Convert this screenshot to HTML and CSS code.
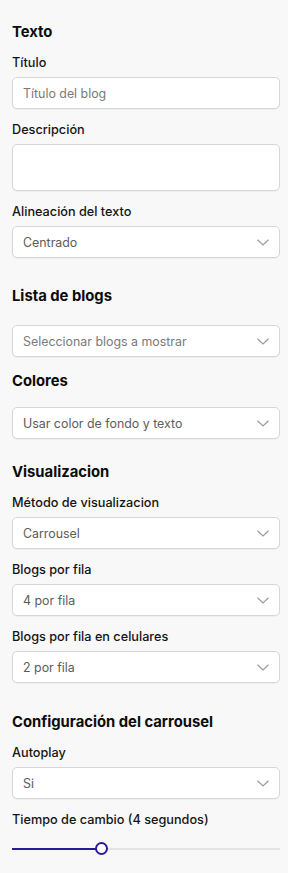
FILE: index.html
```html
<!DOCTYPE html>
<html lang="es">
<head>
<meta charset="utf-8">
<title>Configuración</title>
<link rel="stylesheet" href="styles.css">
</head>
<body>
<div class="panel">
  <section class="section">
    <h2 class="section-title">Texto</h2>
    <div class="field">
      <div class="label">Título</div>
      <div class="control"><span class="placeholder">Título del blog</span></div>
    </div>
    <div class="field">
      <div class="label">Descripción</div>
      <div class="control textarea"></div>
    </div>
    <div class="field">
      <div class="label">Alineación del texto</div>
      <div class="control select"><span class="value">Centrado</span><svg class="chev" viewBox="0 0 12 7" width="12" height="7"><path d="M0.5 0.8 L6 6 L11.5 0.8" fill="none" stroke="#9a9a9a" stroke-width="1.2"/></svg></div>
    </div>
  </section>

  <section class="section s-lista">
    <h2 class="section-title">Lista de blogs</h2>
    <div class="control select gap-big"><span class="placeholder">Seleccionar blogs a mostrar</span><svg class="chev" viewBox="0 0 12 7" width="12" height="7"><path d="M0.5 0.8 L6 6 L11.5 0.8" fill="none" stroke="#9a9a9a" stroke-width="1.2"/></svg></div>
  </section>

  <section class="section s-colores">
    <h2 class="section-title">Colores</h2>
    <div class="control select gap-mid"><span class="value">Usar color de fondo y texto</span><svg class="chev" viewBox="0 0 12 7" width="12" height="7"><path d="M0.5 0.8 L6 6 L11.5 0.8" fill="none" stroke="#9a9a9a" stroke-width="1.2"/></svg></div>
  </section>

  <section class="section s-visual">
    <h2 class="section-title">Visualizacion</h2>
    <div class="field">
      <div class="label">Método de visualizacion</div>
      <div class="control select"><span class="value">Carrousel</span><svg class="chev" viewBox="0 0 12 7" width="12" height="7"><path d="M0.5 0.8 L6 6 L11.5 0.8" fill="none" stroke="#9a9a9a" stroke-width="1.2"/></svg></div>
    </div>
    <div class="field">
      <div class="label">Blogs por fila</div>
      <div class="control select"><span class="value">4 por fila</span><svg class="chev" viewBox="0 0 12 7" width="12" height="7"><path d="M0.5 0.8 L6 6 L11.5 0.8" fill="none" stroke="#9a9a9a" stroke-width="1.2"/></svg></div>
    </div>
    <div class="field">
      <div class="label">Blogs por fila en celulares</div>
      <div class="control select"><span class="value">2 por fila</span><svg class="chev" viewBox="0 0 12 7" width="12" height="7"><path d="M0.5 0.8 L6 6 L11.5 0.8" fill="none" stroke="#9a9a9a" stroke-width="1.2"/></svg></div>
    </div>
  </section>

  <section class="section s-config">
    <h2 class="section-title">Configuración del carrousel</h2>
    <div class="field">
      <div class="label">Autoplay</div>
      <div class="control select"><span class="value">Si</span><svg class="chev" viewBox="0 0 12 7" width="12" height="7"><path d="M0.5 0.8 L6 6 L11.5 0.8" fill="none" stroke="#9a9a9a" stroke-width="1.2"/></svg></div>
    </div>
    <div class="field">
      <div class="label">Tiempo de cambio (4 segundos)</div>
      <div class="slider">
        <div class="track"><div class="fill" style="width: 89px"></div></div>
        <div class="thumb"></div>
      </div>
    </div>
  </section>
</div>
</body>
</html>
```

FILE: styles.css
```css
* { box-sizing: border-box; }
html, body {
  margin: 0;
  padding: 0;
  background: #f8f8f8;
}
body {
  font-family: Inter, "Noto Sans", "Liberation Sans", sans-serif;
  color: #111;
}
.panel {
  padding: 22px 8px 20px 12px;
  display: flex;
  flex-direction: column;
}
.section-title {
  margin: 0;
  font-size: 14.8px;
  line-height: 20px;
  font-weight: 700;
  color: #0c0c0c;
}
.s-lista { margin-top: 28px; }
.s-colores { margin-top: 14px; }
.s-visual { margin-top: 23px; }
.s-config { margin-top: 29px; }
.gap-big { margin-top: 19px; }
.gap-mid { margin-top: 16px; }
.field {
  margin-top: 13px;
  display: flex;
  flex-direction: column;
}
.label {
  font-size: 12.7px;
  line-height: 16px;
  font-weight: 500;
  color: #141414;
  margin-bottom: 6px;
}
.control {
  height: 32px;
  background: #fff;
  border: 1px solid #d6d6d6;
  border-radius: 5px;
  box-shadow: 0 1px 1px rgba(0,0,0,0.04);
  display: flex;
  align-items: center;
  padding: 0 10px 0 10px;
  font-size: 12.4px;
}
.textarea { height: 47px; }
.select { justify-content: space-between; }
.placeholder { color: #7a7a7a; }
.value { color: #5c5c5c; }
.chev { display: block; flex: none; margin-top: 1px; }
.slider {
  position: relative;
  height: 14px;
  margin-top: 8px;
}
.track {
  position: absolute;
  left: 0;
  right: 0;
  top: 6px;
  height: 2px;
  background: #e4e4e4;
}
.fill {
  height: 2px;
  background: #2a1c98;
}
.thumb {
  position: absolute;
  left: 83px;
  top: 0;
  width: 13px;
  height: 13px;
  border-radius: 50%;
  background: #fff;
  border: 2.5px solid #2a1c98;
}
```
